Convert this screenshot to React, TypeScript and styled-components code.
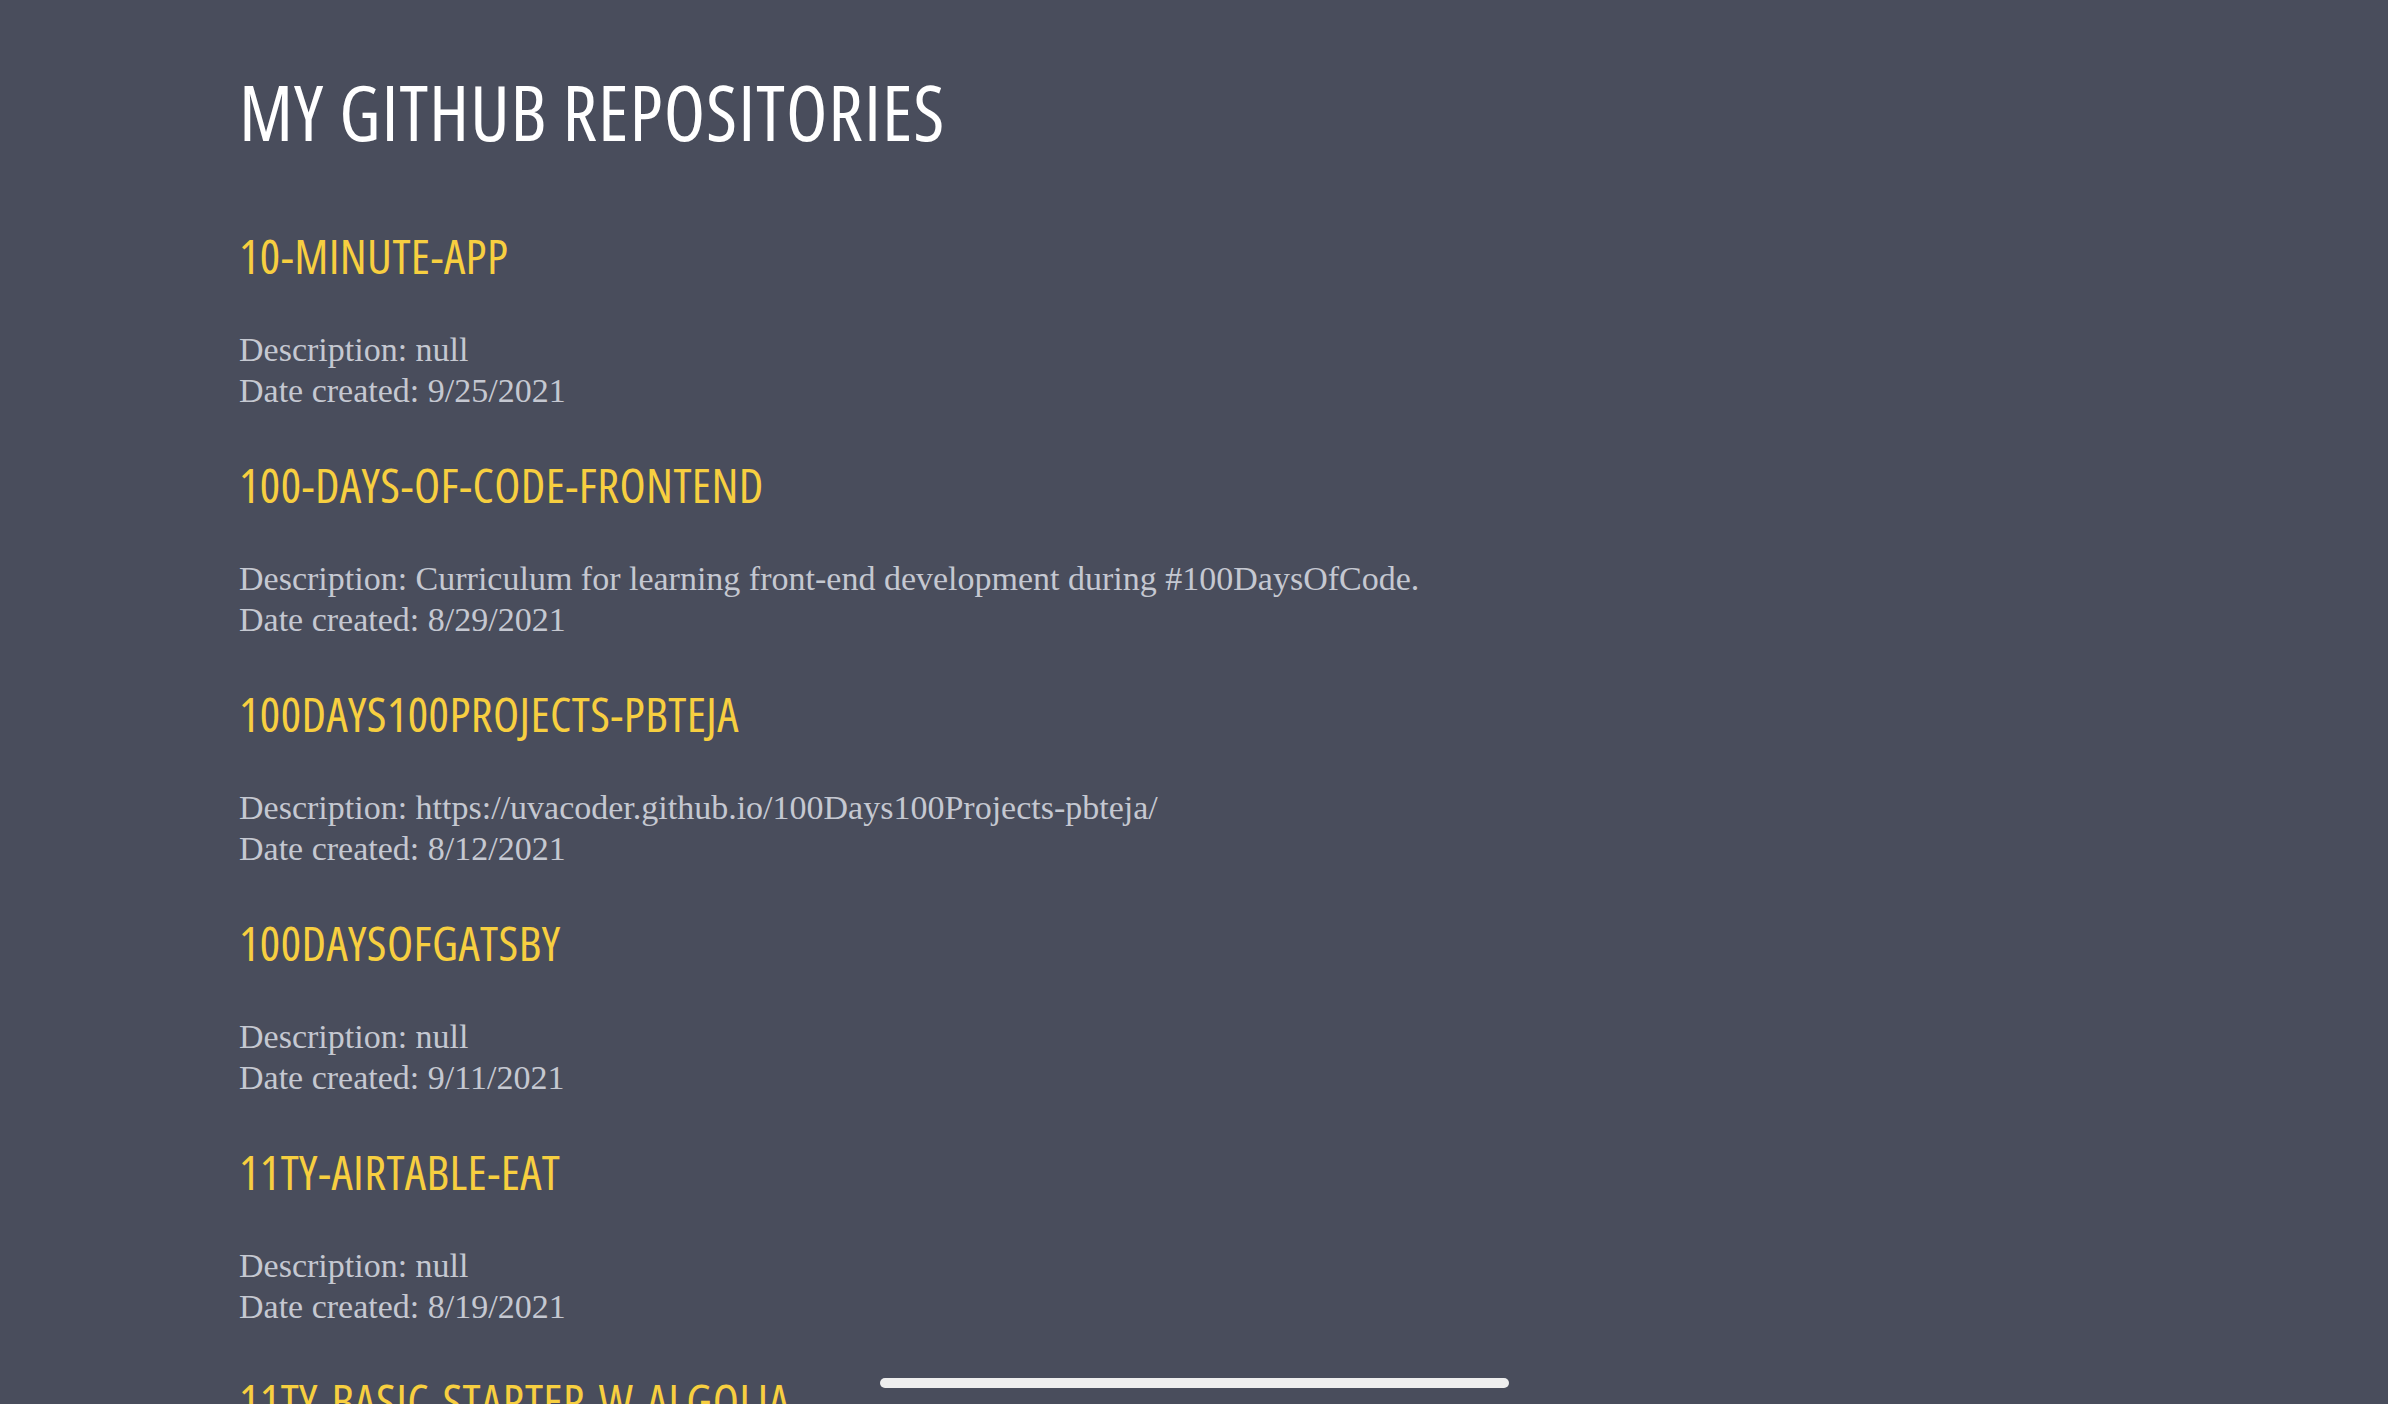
import styled, { createGlobalStyle } from 'styled-components'

interface Repo {
  name: string
  description: string | null
  created: string
}

const repos: Repo[] = [
  { name: '10-minute-app', description: null, created: '9/25/2021' },
  {
    name: '100-days-of-code-frontend',
    description: 'Curriculum for learning front-end development during #100DaysOfCode.',
    created: '8/29/2021',
  },
  {
    name: '100Days100Projects-pbteja',
    description: 'https://uvacoder.github.io/100Days100Projects-pbteja/',
    created: '8/12/2021',
  },
  { name: '100DaysOfGatsby', description: null, created: '9/11/2021' },
  { name: '11ty-airtable-eat', description: null, created: '8/19/2021' },
  { name: '11ty-basic-starter-w-algolia', description: null, created: '8/20/2021' },
  { name: '11ty-blog-starter', description: null, created: '8/21/2021' },
]

const App = () => {
  return (
    <Page>
      <GlobalStyle />
      <Title>My Github Repositories</Title>
      <List>
        {repos.map((repo) => (
          <RepoItem key={repo.name}>
            <RepoName>{repo.name}</RepoName>
            <Meta>Description: {repo.description ?? 'null'}</Meta>
            <Meta>Date created: {repo.created}</Meta>
          </RepoItem>
        ))}
      </List>
      <HomeIndicator />
    </Page>
  )
}

export default App

const GlobalStyle = createGlobalStyle`
  html, body {
    margin: 0;
    padding: 0;
    background: #494d5c;
    overflow: hidden;
  }
`

const Page = styled.main`
  height: 100vh;
  overflow: hidden;
  box-sizing: border-box;
  padding: 72px 239px 0;
  background-color: #494d5c;
`

const Title = styled.h1`
  margin: 0 0 74px;
  font-family: 'Open Sans', 'DejaVu Sans Condensed', sans-serif;
  font-stretch: 75%;
  font-size: 76px;
  line-height: 80px;
  font-weight: 500;
  text-transform: uppercase;
  letter-spacing: 1px;
  color: #ffffff;
`

const List = styled.section`
  display: flex;
  flex-direction: column;
`

const RepoItem = styled.article`
  display: flex;
  flex-direction: column;
  padding-bottom: 44px;
`

const RepoName = styled.h2`
  margin: 0 0 43px;
  font-family: 'Open Sans', 'DejaVu Sans Condensed', sans-serif;
  font-stretch: 75%;
  font-size: 48px;
  line-height: 60px;
  font-weight: 500;
  text-transform: uppercase;
  letter-spacing: 0.4px;
  color: #f7cf40;
`

const Meta = styled.p`
  margin: 0;
  font-family: 'Liberation Serif', serif;
  font-size: 34px;
  line-height: 41px;
  color: #c5c8d1;
`

const HomeIndicator = styled.div`
  position: fixed;
  left: 50%;
  bottom: 16px;
  width: 629px;
  height: 10px;
  margin-left: -314px;
  border-radius: 5px;
  background: #eeeeee;
`
